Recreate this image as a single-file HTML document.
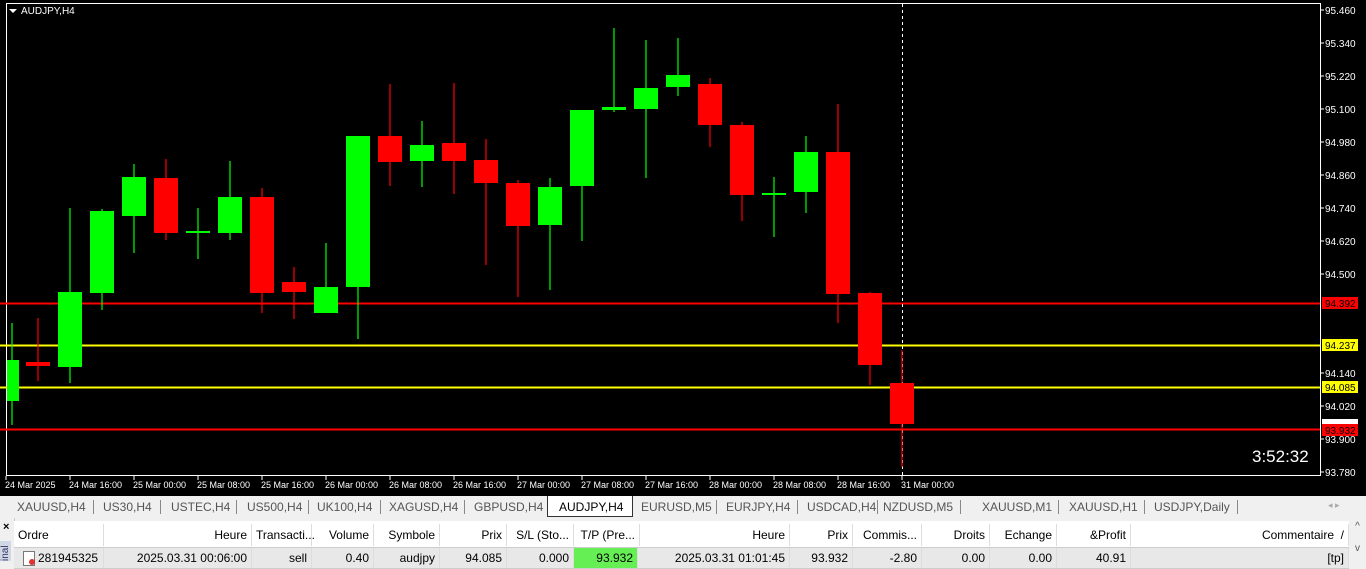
<!DOCTYPE html>
<html><head><meta charset="utf-8"><style>
body{margin:0;width:1366px;height:569px;overflow:hidden;background:#f0f0f0;font-family:"Liberation Sans",sans-serif;}
.tabs{position:absolute;top:496px;left:0;width:1366px;height:22px;background:#f0f0f0;font-size:12px;color:#555;}
.tabs span{position:absolute;top:4px;}
.sep{position:absolute;top:4px;width:1px;height:14px;background:#888;}
.tbl{position:absolute;top:521px;left:14px;width:1352px;height:48px;background:#fff;font-size:12px;color:#000;}
.c{position:absolute;height:22px;line-height:22px;border-right:1px solid #ddd;box-sizing:border-box;padding:0 4px;white-space:nowrap;}
</style></head><body>
<svg width="1366" height="496" style="position:absolute;left:0;top:0" font-family="Liberation Sans, sans-serif">
<rect width="1366" height="496" fill="#000"/>
<rect x="6.5" y="3.5" width="1314" height="472" fill="none" stroke="#fff"/>
<g>
<line x1="0" y1="303.5" x2="1320" y2="303.5" stroke="#f00" stroke-width="2"/>
<line x1="0" y1="345.5" x2="1320" y2="345.5" stroke="#ff0" stroke-width="2"/>
<line x1="0" y1="387.5" x2="1320" y2="387.5" stroke="#ff0" stroke-width="2"/>
<line x1="0" y1="429.5" x2="1320" y2="429.5" stroke="#f00" stroke-width="2"/>
<line x1="902.5" y1="4" x2="902.5" y2="475" stroke="#fff" stroke-dasharray="3,3"/>
</g>
<g stroke-width="1.2">
<line x1="12" y1="323" x2="12" y2="425" stroke="#0f0"/><rect x="7" y="360" width="12" height="41" fill="#0f0"/>
<line x1="38" y1="318" x2="38" y2="381" stroke="#f00"/><rect x="26" y="362" width="24" height="4" fill="#f00"/>
<line x1="70" y1="208" x2="70" y2="383" stroke="#0f0"/><rect x="58" y="292" width="24" height="75" fill="#0f0"/>
<line x1="102" y1="209" x2="102" y2="310" stroke="#0f0"/><rect x="90" y="211" width="24" height="82" fill="#0f0"/>
<line x1="134" y1="164" x2="134" y2="253" stroke="#0f0"/><rect x="122" y="177" width="24" height="39" fill="#0f0"/>
<line x1="166" y1="159" x2="166" y2="240" stroke="#f00"/><rect x="154" y="178" width="24" height="55" fill="#f00"/>
<line x1="198" y1="208" x2="198" y2="259" stroke="#0f0"/><rect x="186" y="231" width="24" height="2" fill="#0f0"/>
<line x1="230" y1="161" x2="230" y2="240" stroke="#0f0"/><rect x="218" y="197" width="24" height="36" fill="#0f0"/>
<line x1="262" y1="188" x2="262" y2="313" stroke="#f00"/><rect x="250" y="197" width="24" height="96" fill="#f00"/>
<line x1="294" y1="267" x2="294" y2="319" stroke="#f00"/><rect x="282" y="282" width="24" height="10" fill="#f00"/>
<line x1="326" y1="243" x2="326" y2="313" stroke="#0f0"/><rect x="314" y="287" width="24" height="26" fill="#0f0"/>
<line x1="358" y1="136" x2="358" y2="339" stroke="#0f0"/><rect x="346" y="136" width="24" height="151" fill="#0f0"/>
<line x1="390" y1="84" x2="390" y2="186" stroke="#f00"/><rect x="378" y="136" width="24" height="26" fill="#f00"/>
<line x1="422" y1="121" x2="422" y2="187" stroke="#0f0"/><rect x="410" y="145" width="24" height="16" fill="#0f0"/>
<line x1="454" y1="83" x2="454" y2="194" stroke="#f00"/><rect x="442" y="143" width="24" height="18" fill="#f00"/>
<line x1="486" y1="139" x2="486" y2="265" stroke="#f00"/><rect x="474" y="160" width="24" height="23" fill="#f00"/>
<line x1="518" y1="180" x2="518" y2="297" stroke="#f00"/><rect x="506" y="183" width="24" height="43" fill="#f00"/>
<line x1="550" y1="178" x2="550" y2="290" stroke="#0f0"/><rect x="538" y="187" width="24" height="38" fill="#0f0"/>
<line x1="582" y1="110" x2="582" y2="241" stroke="#0f0"/><rect x="570" y="110" width="24" height="76" fill="#0f0"/>
<line x1="614" y1="28" x2="614" y2="112" stroke="#0f0"/><rect x="602" y="107" width="24" height="3" fill="#0f0"/>
<line x1="646" y1="40" x2="646" y2="178" stroke="#0f0"/><rect x="634" y="88" width="24" height="21" fill="#0f0"/>
<line x1="678" y1="38" x2="678" y2="96" stroke="#0f0"/><rect x="666" y="75" width="24" height="12" fill="#0f0"/>
<line x1="710" y1="78" x2="710" y2="147" stroke="#f00"/><rect x="698" y="84" width="24" height="41" fill="#f00"/>
<line x1="742" y1="122" x2="742" y2="221" stroke="#f00"/><rect x="730" y="125" width="24" height="70" fill="#f00"/>
<line x1="774" y1="177" x2="774" y2="237" stroke="#0f0"/><rect x="762" y="193" width="24" height="2" fill="#0f0"/>
<line x1="806" y1="136" x2="806" y2="213" stroke="#0f0"/><rect x="794" y="152" width="24" height="40" fill="#0f0"/>
<line x1="838" y1="104" x2="838" y2="323" stroke="#f00"/><rect x="826" y="152" width="24" height="142" fill="#f00"/>
<line x1="870" y1="292" x2="870" y2="385" stroke="#f00"/><rect x="858" y="293" width="24" height="72" fill="#f00"/>
<line x1="902" y1="350" x2="902" y2="467" stroke="#f00"/><rect x="890" y="383" width="24" height="41" fill="#f00"/>
</g>
<polygon points="9,9 17,9 13,13" fill="#fff"/>
<text x="21" y="14" fill="#fff" font-size="10">AUDJPY,H4</text>
<g fill="#fff" font-size="10">
<text x="1325" y="14">95.460</text><text x="1325" y="47">95.340</text><text x="1325" y="80">95.220</text>
<text x="1325" y="113">95.100</text><text x="1325" y="146">94.980</text><text x="1325" y="179">94.860</text>
<text x="1325" y="212">94.740</text><text x="1325" y="245">94.620</text><text x="1325" y="278">94.500</text>
<text x="1325" y="377">94.140</text><text x="1325" y="410">94.020</text><text x="1325" y="443">93.900</text>
<text x="1325" y="476">93.780</text>
</g>
<g stroke="#fff">
<path d="M1320 10h4M1320 43h4M1320 76h4M1320 109h4M1320 142h4M1320 175h4M1320 208h4M1320 241h4M1320 274h4M1320 373h4M1320 406h4M1320 439h4M1320 472h4"/>
</g>
<rect x="1322" y="297" width="36" height="12" fill="#f00"/><text x="1325" y="307" font-size="10" fill="#000">94.392</text>
<rect x="1322" y="339" width="36" height="12" fill="#ff0"/><text x="1325" y="349" font-size="10" fill="#000">94.237</text>
<rect x="1322" y="381" width="36" height="12" fill="#ff0"/><text x="1325" y="391" font-size="10" fill="#000">94.085</text>
<rect x="1322" y="419" width="36" height="5" fill="#fff"/>
<rect x="1322" y="424" width="36" height="12" fill="#f00"/><text x="1325" y="434" font-size="10" fill="#000">93.932</text>
<text x="1252" y="462" fill="#fff" font-size="17">3:52:32</text>
<g fill="#fff" font-size="9">
<text x="5" y="488">24 Mar 2025</text><text x="69" y="488">24 Mar 16:00</text><text x="133" y="488">25 Mar 00:00</text>
<text x="197" y="488">25 Mar 08:00</text><text x="261" y="488">25 Mar 16:00</text><text x="325" y="488">26 Mar 00:00</text>
<text x="389" y="488">26 Mar 08:00</text><text x="453" y="488">26 Mar 16:00</text><text x="517" y="488">27 Mar 00:00</text>
<text x="581" y="488">27 Mar 08:00</text><text x="645" y="488">27 Mar 16:00</text><text x="709" y="488">28 Mar 00:00</text>
<text x="773" y="488">28 Mar 08:00</text><text x="837" y="488">28 Mar 16:00</text><text x="901" y="488">31 Mar 00:00</text>
</g>
<g stroke="#fff"><path d="M6 476v4M70 476v4M134 476v4M198 476v4M262 476v4M326 476v4M390 476v4M454 476v4M518 476v4M582 476v4M646 476v4M710 476v4M774 476v4M838 476v4M902 476v4"/></g>
</svg>
<div class="tabs">
<span style="left:17px">XAUUSD,H4</span><div class="sep" style="left:93px"></div>
<span style="left:103px">US30,H4</span><div class="sep" style="left:160px"></div>
<span style="left:171px">USTEC,H4</span><div class="sep" style="left:236px"></div>
<span style="left:247px">US500,H4</span><div class="sep" style="left:308px"></div>
<span style="left:317px">UK100,H4</span><div class="sep" style="left:380px"></div>
<span style="left:389px">XAGUSD,H4</span><div class="sep" style="left:464px"></div>
<span style="left:474px">GBPUSD,H4</span>
<div style="position:absolute;left:547px;top:0;width:84px;height:20px;background:#fff;border:1px solid #333;border-top:none"></div>
<span style="left:559px;color:#000">AUDJPY,H4</span>
<span style="left:641px">EURUSD,M5</span><div class="sep" style="left:716px"></div>
<span style="left:726px">EURJPY,H4</span><div class="sep" style="left:797px"></div>
<span style="left:807px">USDCAD,H4</span><div class="sep" style="left:877px"></div>
<span style="left:883px">NZDUSD,M5</span><div class="sep" style="left:960px"></div>
<span style="left:982px">XAUUSD,M1</span><div class="sep" style="left:1058px"></div>
<span style="left:1069px">XAUUSD,H1</span><div class="sep" style="left:1144px"></div>
<span style="left:1154px">USDJPY,Daily</span><div class="sep" style="left:1237px"></div>
<span style="left:1328px;color:#aaa;font-size:9px">◂ ▸</span>
</div>
<div style="position:absolute;left:0;top:518px;width:14px;height:51px;background:#f0f0f0;border-right:1px solid #ccc"><div style="font-size:11px;font-weight:bold;margin:3px 0 0 3px">×</div><div style="background:#cfd8e4;height:20px;margin-top:8px;font-size:10px;color:#336;writing-mode:vertical-rl;transform:rotate(180deg)">inal</div></div>
<div class="tbl">
<div style="position:absolute;top:3px;left:0;width:1352px;height:23px;border-bottom:1px solid #ccc">
<div class="c" style="left:0;width:90px">Ordre</div>
<div class="c" style="left:90px;width:148px;text-align:right">Heure</div>
<div class="c" style="left:238px;width:60px">Transacti...</div>
<div class="c" style="left:298px;width:62px;text-align:right">Volume</div>
<div class="c" style="left:360px;width:66px;text-align:right">Symbole</div>
<div class="c" style="left:426px;width:67px;text-align:right">Prix</div>
<div class="c" style="left:493px;width:67px;text-align:right">S/L (Sto...</div>
<div class="c" style="left:560px;width:66px;text-align:right">T/P (Pre...</div>
<div class="c" style="left:626px;width:150px;text-align:right">Heure</div>
<div class="c" style="left:776px;width:63px;text-align:right">Prix</div>
<div class="c" style="left:839px;width:69px;text-align:right">Commis...</div>
<div class="c" style="left:908px;width:68px;text-align:right">Droits</div>
<div class="c" style="left:976px;width:67px;text-align:right">Echange</div>
<div class="c" style="left:1043px;width:74px;text-align:right">&amp;Profit</div>
<div class="c" style="left:1117px;width:218px;text-align:right">Commentaire &nbsp;/</div>
</div>
<div style="position:absolute;top:27px;left:0;width:1335px;height:20px;background:#e8e8e8;border-bottom:1px solid #ccc">
<div class="c" style="left:0;width:90px;height:20px;line-height:20px;padding-left:24px">281945325</div>
<div class="c" style="left:90px;width:148px;height:20px;line-height:20px;text-align:right">2025.03.31 00:06:00</div>
<div class="c" style="left:238px;width:60px;height:20px;line-height:20px;text-align:right">sell</div>
<div class="c" style="left:298px;width:62px;height:20px;line-height:20px;text-align:right">0.40</div>
<div class="c" style="left:360px;width:66px;height:20px;line-height:20px;text-align:right">audjpy</div>
<div class="c" style="left:426px;width:67px;height:20px;line-height:20px;text-align:right">94.085</div>
<div class="c" style="left:493px;width:67px;height:20px;line-height:20px;text-align:right">0.000</div>
<div class="c" style="left:560px;width:64px;height:20px;line-height:20px;text-align:right;background:#66ee55">93.932</div>
<div class="c" style="left:626px;width:150px;height:20px;line-height:20px;text-align:right">2025.03.31 01:01:45</div>
<div class="c" style="left:776px;width:63px;height:20px;line-height:20px;text-align:right">93.932</div>
<div class="c" style="left:839px;width:69px;height:20px;line-height:20px;text-align:right">-2.80</div>
<div class="c" style="left:908px;width:68px;height:20px;line-height:20px;text-align:right">0.00</div>
<div class="c" style="left:976px;width:67px;height:20px;line-height:20px;text-align:right">0.00</div>
<div class="c" style="left:1043px;width:74px;height:20px;line-height:20px;text-align:right">40.91</div>
<div class="c" style="left:1117px;width:218px;height:20px;line-height:20px;text-align:right">[tp]</div>
<div style="position:absolute;left:9px;top:3px;width:10px;height:13px;border:1px solid #777;background:#fff"></div>
<div style="position:absolute;left:15px;top:11px;width:6px;height:6px;border-radius:50%;background:#d33"></div>
</div>
<div style="position:absolute;right:0;top:0;width:17px;height:48px;background:#f0f0f0;font-size:10px;color:#555;text-align:center">^<br><br>v</div>
</div>
</body></html>
